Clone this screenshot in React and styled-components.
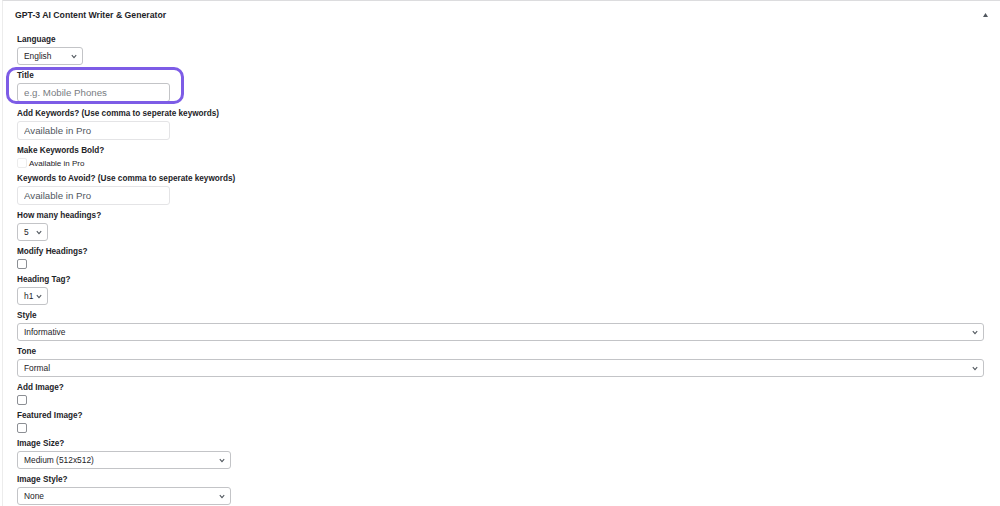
import React from 'react'
import styled, { createGlobalStyle } from 'styled-components'

const GlobalStyle = createGlobalStyle`
  body {
    margin: 0;
    background: #ffffff;
    font-family: "Liberation Sans", Arial, sans-serif;
    color: #1d2327;
  }
`;

const Chevron = () => (
  <svg width="6" height="5" viewBox="0 0 6 5">
    <path d="M0.8 1.2 L3 3.6 L5.2 1.2" fill="none" stroke="#50575e" strokeWidth="1.1" />
  </svg>
);

const App = () => {
  return (
    <>
      <GlobalStyle />
      <Panel>
        <PanelHeader>
          <PanelTitle>GPT-3 AI Content Writer &amp; Generator</PanelTitle>
          <Toggle>
            <svg width="5" height="4" viewBox="0 0 5 4">
              <path d="M2.5 0 L5 4 L0 4 Z" fill="#50575e" />
            </svg>
          </Toggle>
        </PanelHeader>
        <PanelBody>
          <Field>
            <Label>Language</Label>
            <SelectBox $w="66px">
              <span>English</span>
              <Chevron />
            </SelectBox>
          </Field>

          <Highlight>
            <Label>Title</Label>
            <TextInput placeholder="e.g. Mobile Phones" />
          </Highlight>

          <Field>
            <Label>Add Keywords? (Use comma to seperate keywords)</Label>
            <TextInput $disabled value="Available in Pro" readOnly />
          </Field>

          <Field>
            <Label>Make Keywords Bold?</Label>
            <CheckRow>
              <CheckBox $disabled />
              <CheckText>Available in Pro</CheckText>
            </CheckRow>
          </Field>

          <Field>
            <Label>Keywords to Avoid? (Use comma to seperate keywords)</Label>
            <TextInput $disabled value="Available in Pro" readOnly />
          </Field>

          <Field>
            <Label>How many headings?</Label>
            <SelectBox $w="31px">
              <span>5</span>
              <Chevron />
            </SelectBox>
          </Field>

          <Field>
            <Label>Modify Headings?</Label>
            <CheckBox />
          </Field>

          <Field>
            <Label>Heading Tag?</Label>
            <SelectBox $w="31px">
              <span>h1</span>
              <Chevron />
            </SelectBox>
          </Field>

          <Field>
            <Label>Style</Label>
            <SelectBox $w="100%">
              <span>Informative</span>
              <Chevron />
            </SelectBox>
          </Field>

          <Field>
            <Label>Tone</Label>
            <SelectBox $w="100%">
              <span>Formal</span>
              <Chevron />
            </SelectBox>
          </Field>

          <Field>
            <Label>Add Image?</Label>
            <CheckBox />
          </Field>

          <Field>
            <Label>Featured Image?</Label>
            <CheckBox />
          </Field>

          <Field>
            <Label>Image Size?</Label>
            <SelectBox $w="214px">
              <span>Medium (512x512)</span>
              <Chevron />
            </SelectBox>
          </Field>

          <Field>
            <Label>Image Style?</Label>
            <SelectBox $w="214px">
              <span>None</span>
              <Chevron />
            </SelectBox>
          </Field>
        </PanelBody>
      </Panel>
    </>
  )
}

const Panel = styled.div`
  margin-left: 2px;
  border-top: 1px solid #dcdcde;
  border-left: 1px solid #ececec;
  min-height: 100vh;
  box-sizing: border-box;
`;

const PanelHeader = styled.div`
  display: flex;
  justify-content: space-between;
  align-items: center;
  padding: 8px 11px 0 12px;
  height: 12px;
`;

const PanelTitle = styled.h2`
  margin: 0;
  font-size: 8.7px;
  font-weight: 700;
  line-height: 12px;
  color: #1d2327;
`;

const Toggle = styled.span`
  display: flex;
  align-items: center;
  justify-content: center;
  width: 8px;
  height: 8px;
`;

const PanelBody = styled.div`
  padding: 14px 16px 0 14px;
`;

const Field = styled.div`
  margin-bottom: 6px;
`;

const Highlight = styled.div`
  position: relative;
  margin-bottom: 7px;

  &::after {
    content: "";
    position: absolute;
    left: -11px;
    top: -4px;
    width: 178px;
    height: 37px;
    border: 3px solid #7d5ce6;
    border-radius: 10px;
    box-sizing: border-box;
    pointer-events: none;
  }
`;

const Label = styled.label`
  display: block;
  font-size: 8.2px;
  font-weight: 700;
  line-height: 10px;
  margin-bottom: 2px;
  color: #1d2327;
`;

const TextInput = styled.input`
  display: block;
  box-sizing: border-box;
  width: 153px;
  height: 19px;
  padding: 0 6px;
  border: 1px solid ${p => (p.$disabled ? '#e4e4e6' : '#c3c4c7')};
  border-radius: 3px;
  background: #ffffff;
  font-family: "Liberation Sans", Arial, sans-serif;
  font-size: 9.7px;
  color: ${p => (p.$disabled ? '#50575e' : '#1d2327')};
  outline: none;

  &::placeholder {
    color: #787c82;
  }
`;

const SelectBox = styled.div`
  display: flex;
  align-items: center;
  justify-content: space-between;
  box-sizing: border-box;
  width: ${p => p.$w};
  height: 18px;
  padding: 0 5px 0 6px;
  border: 1px solid #c3c4c7;
  border-radius: 3px;
  background: #ffffff;
  font-size: 8.4px;
  color: #1d2327;
`;

const CheckRow = styled.div`
  display: flex;
  align-items: center;
  gap: 2px;
  height: 10px;
`;

const CheckBox = styled.span`
  display: block;
  box-sizing: border-box;
  width: 10px;
  height: 10px;
  border: 1px solid ${p => (p.$disabled ? '#ececec' : '#8c8f94')};
  border-radius: 2px;
  background: #ffffff;
`;

const CheckText = styled.span`
  font-size: 8px;
  color: #1d2327;
`;

export default App
